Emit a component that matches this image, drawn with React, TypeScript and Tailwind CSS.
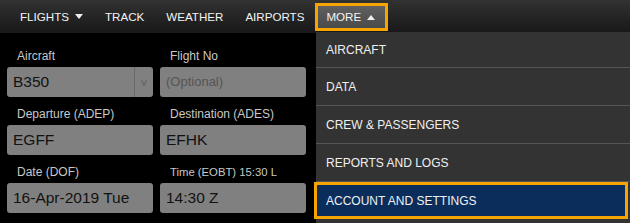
export default function App() {
  return (
    <div className="relative h-[223px] w-[630px] overflow-hidden bg-black font-['Liberation_Sans',Arial,sans-serif]">
      <nav className="flex h-[33px] items-center bg-gradient-to-b from-[#323232] to-[#181818] pl-[9px] text-[11.6px] text-[#f4f4f4]">
        <NavItem label="FLIGHTS" caret="down" />
        <NavItem label="TRACK" />
        <NavItem label="WEATHER" />
        <NavItem label="AIRPORTS" />
        <div className="flex h-[28px] items-center gap-[6px] border-[3px] border-[#f7a400] bg-gradient-to-b from-[#606060] to-[#4a4a4a] pl-[8px] pr-[10px]">
          <span>MORE</span>
          <Caret dir="up" />
        </div>
      </nav>

      <section className="grid w-[313px] grid-cols-2 gap-x-[7px] gap-y-[8px] px-[7px] pt-[14px]">
        <Field label="Aircraft">
          <div className="flex h-[30px] items-center rounded-[3px] bg-[#808080] text-[15.5px] text-[#121212]">
            <span className="flex-1 pl-[6px]">B350</span>
            <span className="flex h-full w-[19px] items-center justify-center border-l border-[#6a6a6a] text-[11px] text-[#5e5e5e]">v</span>
          </div>
        </Field>
        <Field label="Flight No">
          <Input value="(Optional)" muted />
        </Field>
        <Field label="Departure (ADEP)">
          <Input value="EGFF" />
        </Field>
        <Field label="Destination (ADES)">
          <Input value="EFHK" />
        </Field>
        <Field label="Date (DOF)">
          <Input value="16-Apr-2019 Tue" />
        </Field>
        <Field label="Time (EOBT) 15:30 L" small>
          <Input value="14:30 Z" />
        </Field>
      </section>

      <ul className="absolute left-[316px] right-0 top-[32px] bottom-0 bg-[#333333] text-[12px] text-[#f0f0f0]">
        <MenuItem label="AIRCRAFT" first />
        <MenuItem label="DATA" />
        <MenuItem label="CREW & PASSENGERS" />
        <MenuItem label="REPORTS AND LOGS" />
        <li className="relative h-[37px]">
          <span className="absolute -left-[2px] right-[2px] top-0 bottom-0 flex items-center border-[3px] border-[#f7a400] bg-[#0a2d5c] pl-[9px]">
            ACCOUNT AND SETTINGS
          </span>
        </li>
      </ul>
    </div>
  );
}

function NavItem({ label, caret }: { label: string; caret?: "down" }) {
  return (
    <div className="flex items-center gap-[6px] px-[11px]">
      <span>{label}</span>
      {caret && <Caret dir="down" />}
    </div>
  );
}

function Caret({ dir }: { dir: "up" | "down" }) {
  return (
    <svg width="8" height="5" viewBox="0 0 8 5" className="mt-[1px]">
      {dir === "down" ? <path d="M0 0h8L4 5z" fill="#eeeeee" /> : <path d="M0 5h8L4 0z" fill="#eeeeee" />}
    </svg>
  );
}

function Field({ label, small, children }: { label: string; small?: boolean; children: React.ReactNode }) {
  return (
    <div className="flex flex-col gap-[2px]">
      <span className={`h-[18px] pl-[10px] leading-[18px] text-[#c8c8c8] ${small ? "text-[11.3px]" : "text-[12px]"}`}>
        {label}
      </span>
      {children}
    </div>
  );
}

function Input({ value, muted }: { value: string; muted?: boolean }) {
  return (
    <div
      className={`flex h-[30px] items-center rounded-[3px] bg-[#808080] pl-[6px] ${
        muted ? "text-[13px] text-[#555555]" : "text-[15.5px] text-[#121212]"
      }`}
    >
      {value}
    </div>
  );
}

function MenuItem({ label, first }: { label: string; first?: boolean }) {
  return (
    <li className={`flex items-center border-b border-[#555555] pl-[10px] ${first ? "h-[36px]" : "h-[38px]"}`}>
      {label}
    </li>
  );
}
